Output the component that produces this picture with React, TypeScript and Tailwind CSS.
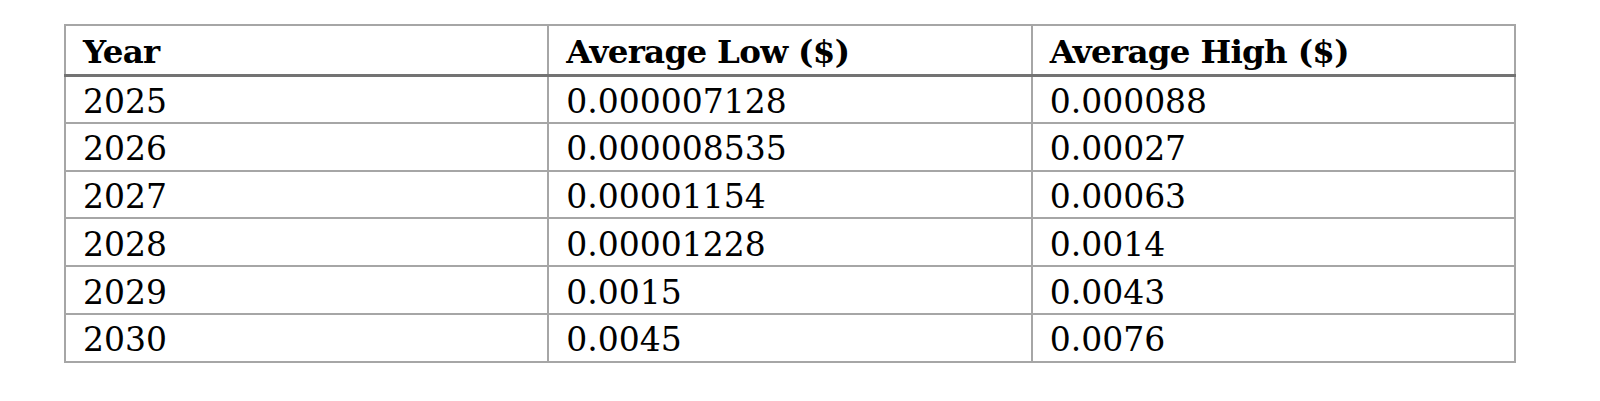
const rows = [
  { year: "2025", low: "0.000007128", high: "0.000088" },
  { year: "2026", low: "0.000008535", high: "0.00027" },
  { year: "2027", low: "0.00001154", high: "0.00063" },
  { year: "2028", low: "0.00001228", high: "0.0014" },
  { year: "2029", low: "0.0015", high: "0.0043" },
  { year: "2030", low: "0.0045", high: "0.0076" },
];

const headers = ["Year", "Average Low ($)", "Average High ($)"];

export default function App() {
  return (
    <div className="min-h-[401px] bg-white pt-[24px] pl-[64px] font-['DejaVu_Serif',serif] text-black">
      <table className="w-[1452px] table-fixed border-collapse">
        <thead>
          <tr>
            {headers.map((h) => (
              <th
                key={h}
                className="h-[50px] border-2 border-b-[3px] border-[#a6a6a6] border-b-[#737373] px-[17px] pt-[4px] text-left align-middle text-[32.5px] leading-none font-bold tracking-[-0.7px]"
              >
                {h}
              </th>
            ))}
          </tr>
        </thead>
        <tbody>
          {rows.map((r) => (
            <tr key={r.year}>
              {[r.year, r.low, r.high].map((v, i) => (
                <td
                  key={i}
                  className="h-[47.8px] border-2 border-[#a6a6a6] px-[17px] pt-[4px] text-left align-middle text-[33px] leading-none"
                >
                  {v}
                </td>
              ))}
            </tr>
          ))}
        </tbody>
      </table>
    </div>
  );
}
